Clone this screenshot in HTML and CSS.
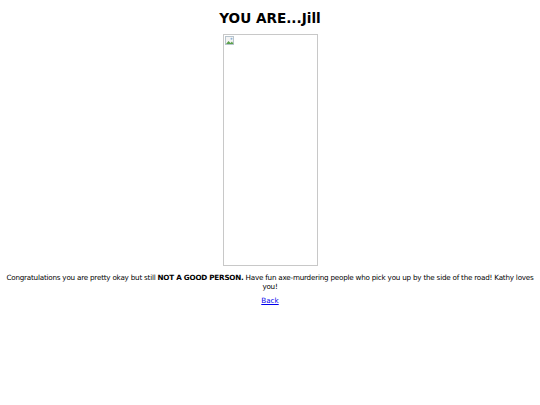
FILE: index.html
```html
<!DOCTYPE html>
<html lang="en">
<head>
    <meta charset="UTF-8">
    <title>YOU ARE...Jill</title>
    <link rel="stylesheet" href="styles.css">
</head>
<body>
    <div class="result">
        <h1>YOU ARE...Jill</h1>

        <div class="pic">
            <svg class="broken" width="10" height="10" viewBox="0 0 10 10">
                <rect x="0.5" y="0.5" width="8" height="8" fill="#f4f4f4" stroke="#b8c4cc"/>
                <path d="M1 8 L3.5 5 L5.5 7 L7 5.5 L8.5 8 Z" fill="#5aa04a"/>
                <circle cx="6.5" cy="2.8" r="1" fill="#8fb3d6"/>
            </svg>
        </div>

        <p class="verdict">
            Congratulations you are pretty okay but still <b>NOT A GOOD PERSON.</b>
            Have fun axe-murdering people who pick you up by the side of the road! Kathy loves you!
        </p>

        <p class="back"><a href="#">Back</a></p>
    </div>
</body>
</html>
```

FILE: styles.css
```css
body {
    margin: 6px;
    font-family: "DejaVu Sans", Verdana, sans-serif;
    font-size: 7.2px;
    color: #000;
    background: #fff;
}

.result {
    text-align: center;
}

h1 {
    font-size: 13.6px;
    font-weight: bold;
    margin: 4px 0 8px;
}

.pic {
    width: 91px;
    height: 228px;
    margin: 0 auto;
    border: 1px solid #c8c8c8;
    text-align: left;
    padding: 1px;
}

.broken {
    display: block;
}

.verdict {
    margin: 7px 0 0;
    line-height: 9px;
    letter-spacing: -0.22px;
}

.back {
    margin: 5px 0 0;
}

a {
    color: #0000ee;
}
```
